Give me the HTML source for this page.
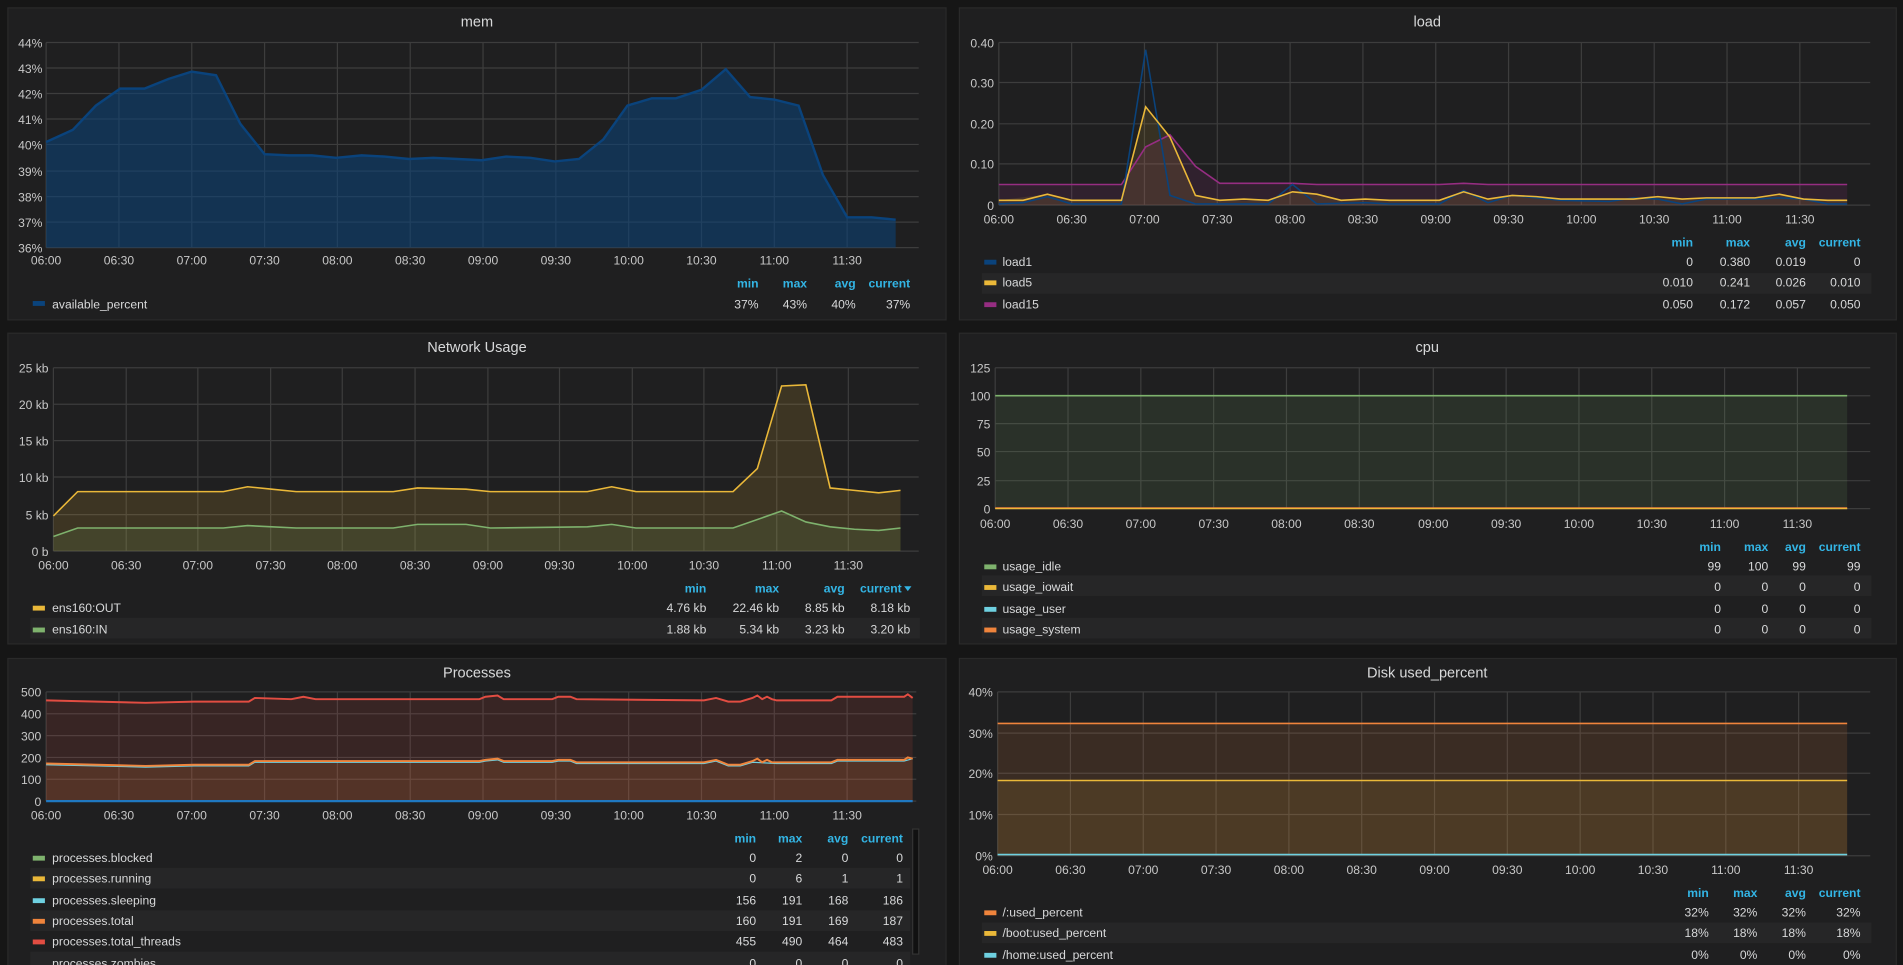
<!DOCTYPE html>
<html><head><meta charset="utf-8">
<style>
html,body{margin:0;padding:0;background:#161616;overflow:hidden}
svg{display:block}
text{font-family:"Liberation Sans",sans-serif}
.t{fill:#d8d9da;font-size:12px;text-anchor:middle}
.yl{fill:#c8c8c8;font-size:10px;text-anchor:end}
.xl{fill:#c8c8c8;font-size:10px;text-anchor:middle}
.lh{fill:#33b5e5;font-size:10px;font-weight:bold;text-anchor:end}
.lv{fill:#d8d9da;font-size:10px;text-anchor:end}
.ln{fill:#d8d9da;font-size:10px}
.g{stroke:#3d3d3d;stroke-width:1}
.p{fill:#1f1f20;stroke:#2a2a2a}
</style></head><body>
<svg width="1903" height="965" viewBox="0 0 1568 795" preserveAspectRatio="none" xmlns="http://www.w3.org/2000/svg">
<rect width="1568" height="795" fill="#161616"/>

<!-- ===== MEM ===== -->
<rect class="p" x="6.5" y="6.5" width="773" height="257"/>
<text class="t" x="393" y="22">mem</text>
<g class="g">
<line x1="38" y1="35" x2="757" y2="35"/><line x1="38" y1="56" x2="757" y2="56"/><line x1="38" y1="77" x2="757" y2="77"/><line x1="38" y1="98" x2="757" y2="98"/><line x1="38" y1="119" x2="757" y2="119"/><line x1="38" y1="141" x2="757" y2="141"/><line x1="38" y1="162" x2="757" y2="162"/><line x1="38" y1="183" x2="757" y2="183"/><line x1="38" y1="204" x2="757" y2="204"/>
<line x1="38" y1="35" x2="38" y2="204"/><line x1="98" y1="35" x2="98" y2="204"/><line x1="158" y1="35" x2="158" y2="204"/><line x1="218" y1="35" x2="218" y2="204"/><line x1="278" y1="35" x2="278" y2="204"/><line x1="338" y1="35" x2="338" y2="204"/><line x1="398" y1="35" x2="398" y2="204"/><line x1="458" y1="35" x2="458" y2="204"/><line x1="518" y1="35" x2="518" y2="204"/><line x1="578" y1="35" x2="578" y2="204"/><line x1="638" y1="35" x2="638" y2="204"/><line x1="698" y1="35" x2="698" y2="204"/>
</g>
<polygon fill="#0a437c" fill-opacity="0.55" points="38,204 38,117 60,107 79,87 99,73 119,73 139,65 158,59 178,62 198,102 218,127 238,128 257,128 277,130 298,128 317,129 337,131 357,130 377,131 397,132 417,129 437,130 457,133 477,131 497,115 517,87 537,81 557,81 578,74 598,57 618,80 638,82 658,87 678,144 698,179 718,179 738,181 738,204"/>
<polyline fill="none" stroke="#0a437c" stroke-width="2" points="38,117 60,107 79,87 99,73 119,73 139,65 158,59 178,62 198,102 218,127 238,128 257,128 277,130 298,128 317,129 337,131 357,130 377,131 397,132 417,129 437,130 457,133 477,131 497,115 517,87 537,81 557,81 578,74 598,57 618,80 638,82 658,87 678,144 698,179 718,179 738,181"/>
<g>
<text class="yl" x="35" y="39">44%</text><text class="yl" x="35" y="60">43%</text><text class="yl" x="35" y="81">42%</text><text class="yl" x="35" y="102">41%</text><text class="yl" x="35" y="123">40%</text><text class="yl" x="35" y="145">39%</text><text class="yl" x="35" y="166">38%</text><text class="yl" x="35" y="187">37%</text><text class="yl" x="35" y="208">36%</text>
</g>
<g>
<text class="xl" x="38" y="218">06:00</text><text class="xl" x="98" y="218">06:30</text><text class="xl" x="158" y="218">07:00</text><text class="xl" x="218" y="218">07:30</text><text class="xl" x="278" y="218">08:00</text><text class="xl" x="338" y="218">08:30</text><text class="xl" x="398" y="218">09:00</text><text class="xl" x="458" y="218">09:30</text><text class="xl" x="518" y="218">10:00</text><text class="xl" x="578" y="218">10:30</text><text class="xl" x="638" y="218">11:00</text><text class="xl" x="698" y="218">11:30</text>
</g>
<text class="lh" x="625" y="237">min</text><text class="lh" x="665" y="237">max</text><text class="lh" x="705" y="237">avg</text><text class="lh" x="750" y="237">current</text>
<rect x="27" y="248" width="10" height="4" fill="#0a437c"/><text class="ln" x="43" y="254">available_percent</text>
<text class="lv" x="625" y="254">37%</text><text class="lv" x="665" y="254">43%</text><text class="lv" x="705" y="254">40%</text><text class="lv" x="750" y="254">37%</text>

<!-- ===== LOAD ===== -->
<rect class="p" x="790.5" y="6.5" width="772" height="257"/>
<text class="t" x="1176" y="22">load</text>
<g class="g">
<line x1="823" y1="35" x2="1541" y2="35"/><line x1="823" y1="68" x2="1541" y2="68"/><line x1="823" y1="102" x2="1541" y2="102"/><line x1="823" y1="135" x2="1541" y2="135"/><line x1="823" y1="169" x2="1541" y2="169"/>
<line x1="823" y1="35" x2="823" y2="169"/><line x1="883" y1="35" x2="883" y2="169"/><line x1="943" y1="35" x2="943" y2="169"/><line x1="1003" y1="35" x2="1003" y2="169"/><line x1="1063" y1="35" x2="1063" y2="169"/><line x1="1123" y1="35" x2="1123" y2="169"/><line x1="1183" y1="35" x2="1183" y2="169"/><line x1="1243" y1="35" x2="1243" y2="169"/><line x1="1303" y1="35" x2="1303" y2="169"/><line x1="1363" y1="35" x2="1363" y2="169"/><line x1="1423" y1="35" x2="1423" y2="169"/><line x1="1483" y1="35" x2="1483" y2="169"/>
</g>
<polygon fill="#962d82" fill-opacity="0.15" points="823,169 823,152 924,152 944,121 964,111 985,137 1005,151 1522,152 1522,169"/>
<polygon fill="#eab839" fill-opacity="0.12" points="823,169 823,165 863,160 883,165 924,165 944,88 964,113 985,161 1005,165 1045,165 1065,158 1085,160 1105,165 1186,165 1206,158 1226,164 1246,161 1286,164 1346,164 1366,162 1386,164 1406,163 1446,163 1466,160 1486,164 1522,165 1522,169"/>
<polyline fill="none" stroke="#962d82" stroke-width="1.3" points="823,152 924,152 944,121 964,111 985,137 1005,151 1065,151 1085,152 1186,152 1206,151 1226,152 1522,152"/>
<polyline fill="none" stroke="#0a437c" stroke-width="1.3" points="823,168 843,167 863,162 883,168 924,168 944,41 964,161 985,168 1045,168 1065,152 1085,168 1125,167 1145,168 1186,168 1206,157 1226,167 1246,161 1286,165 1326,166 1346,163 1366,164 1386,168 1406,164 1446,164 1466,163 1486,164 1506,168 1522,168"/>
<polyline fill="none" stroke="#eab839" stroke-width="1.3" points="823,165 843,165 863,160 883,165 924,165 944,88 964,113 985,161 1005,165 1025,164 1045,165 1065,158 1085,160 1105,165 1125,164 1145,165 1186,165 1206,158 1226,164 1246,161 1266,162 1286,164 1346,164 1366,162 1386,164 1406,163 1446,163 1466,160 1486,164 1506,165 1522,165"/>
<g>
<text class="yl" x="819" y="39">0.40</text><text class="yl" x="819" y="72">0.30</text><text class="yl" x="819" y="106">0.20</text><text class="yl" x="819" y="139">0.10</text><text class="yl" x="819" y="173">0</text>
</g>
<g>
<text class="xl" x="823" y="184">06:00</text><text class="xl" x="883" y="184">06:30</text><text class="xl" x="943" y="184">07:00</text><text class="xl" x="1003" y="184">07:30</text><text class="xl" x="1063" y="184">08:00</text><text class="xl" x="1123" y="184">08:30</text><text class="xl" x="1183" y="184">09:00</text><text class="xl" x="1243" y="184">09:30</text><text class="xl" x="1303" y="184">10:00</text><text class="xl" x="1363" y="184">10:30</text><text class="xl" x="1423" y="184">11:00</text><text class="xl" x="1483" y="184">11:30</text>
</g>
<text class="lh" x="1395" y="203">min</text><text class="lh" x="1442" y="203">max</text><text class="lh" x="1488" y="203">avg</text><text class="lh" x="1533" y="203">current</text>
<rect x="809" y="225" width="733" height="17" fill="#262627"/>
<rect x="811" y="214" width="10" height="4" fill="#0a437c"/><text class="ln" x="826" y="219">load1</text>
<text class="lv" x="1395" y="219">0</text><text class="lv" x="1442" y="219">0.380</text><text class="lv" x="1488" y="219">0.019</text><text class="lv" x="1533" y="219">0</text>
<rect x="811" y="231" width="10" height="4" fill="#eab839"/><text class="ln" x="826" y="236">load5</text>
<text class="lv" x="1395" y="236">0.010</text><text class="lv" x="1442" y="236">0.241</text><text class="lv" x="1488" y="236">0.026</text><text class="lv" x="1533" y="236">0.010</text>
<rect x="811" y="249" width="10" height="4" fill="#962d82"/><text class="ln" x="826" y="254">load15</text>
<text class="lv" x="1395" y="254">0.050</text><text class="lv" x="1442" y="254">0.172</text><text class="lv" x="1488" y="254">0.057</text><text class="lv" x="1533" y="254">0.050</text>

<!-- ===== NETWORK ===== -->
<rect class="p" x="6.5" y="274.5" width="773" height="256"/>
<text class="t" x="393" y="290">Network Usage</text>
<g class="g">
<line x1="44" y1="303" x2="757" y2="303"/><line x1="44" y1="333" x2="757" y2="333"/><line x1="44" y1="363" x2="757" y2="363"/><line x1="44" y1="393" x2="757" y2="393"/><line x1="44" y1="424" x2="757" y2="424"/><line x1="44" y1="454" x2="757" y2="454"/>
<line x1="44" y1="303" x2="44" y2="454"/><line x1="104" y1="303" x2="104" y2="454"/><line x1="163" y1="303" x2="163" y2="454"/><line x1="223" y1="303" x2="223" y2="454"/><line x1="282" y1="303" x2="282" y2="454"/><line x1="342" y1="303" x2="342" y2="454"/><line x1="402" y1="303" x2="402" y2="454"/><line x1="461" y1="303" x2="461" y2="454"/><line x1="521" y1="303" x2="521" y2="454"/><line x1="580" y1="303" x2="580" y2="454"/><line x1="640" y1="303" x2="640" y2="454"/><line x1="699" y1="303" x2="699" y2="454"/>
</g>
<polygon fill="#eab839" fill-opacity="0.15" points="44,454 44,425 64,405 184,405 204,401 224,403 244,405 324,405 344,402 384,403 404,405 484,405 504,401 524,405 604,405 624,386 644,318 664,317 684,402 704,404 724,406 742,404 742,454"/>
<polygon fill="#7eb26d" fill-opacity="0.12" points="44,454 44,442 64,435 184,435 204,433 224,434 244,435 324,435 344,432 384,432 404,435 484,434 504,432 524,435 604,435 644,421 664,430 684,434 704,436 724,437 742,435 742,454"/>
<polyline fill="none" stroke="#eab839" stroke-width="1.3" points="44,425 64,405 184,405 204,401 224,403 244,405 324,405 344,402 384,403 404,405 484,405 504,401 524,405 604,405 624,386 644,318 664,317 684,402 704,404 724,406 742,404"/>
<polyline fill="none" stroke="#7eb26d" stroke-width="1.3" points="44,442 64,435 184,435 204,433 224,434 244,435 324,435 344,432 384,432 404,435 484,434 504,432 524,435 604,435 644,421 664,430 684,434 704,436 724,437 742,435"/>
<g>
<text class="yl" x="40" y="307">25 kb</text><text class="yl" x="40" y="337">20 kb</text><text class="yl" x="40" y="367">15 kb</text><text class="yl" x="40" y="397">10 kb</text><text class="yl" x="40" y="428">5 kb</text><text class="yl" x="40" y="458">0 b</text>
</g>
<g>
<text class="xl" x="44" y="469">06:00</text><text class="xl" x="104" y="469">06:30</text><text class="xl" x="163" y="469">07:00</text><text class="xl" x="223" y="469">07:30</text><text class="xl" x="282" y="469">08:00</text><text class="xl" x="342" y="469">08:30</text><text class="xl" x="402" y="469">09:00</text><text class="xl" x="461" y="469">09:30</text><text class="xl" x="521" y="469">10:00</text><text class="xl" x="580" y="469">10:30</text><text class="xl" x="640" y="469">11:00</text><text class="xl" x="699" y="469">11:30</text>
</g>
<text class="lh" x="582" y="488">min</text><text class="lh" x="642" y="488">max</text><text class="lh" x="696" y="488">avg</text><text class="lh" x="743" y="488">current</text>
<polygon points="745,483 751,483 748,487" fill="#33b5e5"/>
<rect x="25" y="509" width="733" height="17" fill="#262627"/>
<rect x="27" y="499" width="10" height="4" fill="#eab839"/><text class="ln" x="43" y="504">ens160:OUT</text>
<text class="lv" x="582" y="504">4.76 kb</text><text class="lv" x="642" y="504">22.46 kb</text><text class="lv" x="696" y="504">8.85 kb</text><text class="lv" x="750" y="504">8.18 kb</text>
<rect x="27" y="517" width="10" height="4" fill="#7eb26d"/><text class="ln" x="43" y="522">ens160:IN</text>
<text class="lv" x="582" y="522">1.88 kb</text><text class="lv" x="642" y="522">5.34 kb</text><text class="lv" x="696" y="522">3.23 kb</text><text class="lv" x="750" y="522">3.20 kb</text>

<!-- ===== CPU ===== -->
<rect class="p" x="790.5" y="274.5" width="772" height="256"/>
<text class="t" x="1176" y="290">cpu</text>
<g class="g">
<line x1="820" y1="303" x2="1541" y2="303"/><line x1="820" y1="326" x2="1541" y2="326"/><line x1="820" y1="349" x2="1541" y2="349"/><line x1="820" y1="372" x2="1541" y2="372"/><line x1="820" y1="396" x2="1541" y2="396"/><line x1="820" y1="419" x2="1541" y2="419"/>
<line x1="820" y1="303" x2="820" y2="419"/><line x1="880" y1="303" x2="880" y2="419"/><line x1="940" y1="303" x2="940" y2="419"/><line x1="1000" y1="303" x2="1000" y2="419"/><line x1="1060" y1="303" x2="1060" y2="419"/><line x1="1120" y1="303" x2="1120" y2="419"/><line x1="1181" y1="303" x2="1181" y2="419"/><line x1="1241" y1="303" x2="1241" y2="419"/><line x1="1301" y1="303" x2="1301" y2="419"/><line x1="1361" y1="303" x2="1361" y2="419"/><line x1="1421" y1="303" x2="1421" y2="419"/><line x1="1481" y1="303" x2="1481" y2="419"/>
</g>
<rect x="820" y="326" width="702" height="93" fill="#7eb26d" fill-opacity="0.12"/>
<line x1="820" y1="326" x2="1522" y2="326" stroke="#7eb26d" stroke-width="1.3"/>
<line x1="820" y1="418.5" x2="1522" y2="418.5" stroke="#ef843c" stroke-width="1.3"/>
<line x1="820" y1="419" x2="1522" y2="419" stroke="#eab839" stroke-width="1"/>
<g>
<text class="yl" x="816" y="307">125</text><text class="yl" x="816" y="330">100</text><text class="yl" x="816" y="353">75</text><text class="yl" x="816" y="376">50</text><text class="yl" x="816" y="400">25</text><text class="yl" x="816" y="423">0</text>
</g>
<g>
<text class="xl" x="820" y="435">06:00</text><text class="xl" x="880" y="435">06:30</text><text class="xl" x="940" y="435">07:00</text><text class="xl" x="1000" y="435">07:30</text><text class="xl" x="1060" y="435">08:00</text><text class="xl" x="1120" y="435">08:30</text><text class="xl" x="1181" y="435">09:00</text><text class="xl" x="1241" y="435">09:30</text><text class="xl" x="1301" y="435">10:00</text><text class="xl" x="1361" y="435">10:30</text><text class="xl" x="1421" y="435">11:00</text><text class="xl" x="1481" y="435">11:30</text>
</g>
<text class="lh" x="1418" y="454">min</text><text class="lh" x="1457" y="454">max</text><text class="lh" x="1488" y="454">avg</text><text class="lh" x="1533" y="454">current</text>
<rect x="809" y="474" width="733" height="17" fill="#262627"/>
<rect x="809" y="509" width="733" height="17" fill="#262627"/>
<rect x="811" y="465" width="10" height="4" fill="#7eb26d"/><text class="ln" x="826" y="470">usage_idle</text>
<text class="lv" x="1418" y="470">99</text><text class="lv" x="1457" y="470">100</text><text class="lv" x="1488" y="470">99</text><text class="lv" x="1533" y="470">99</text>
<rect x="811" y="482" width="10" height="4" fill="#eab839"/><text class="ln" x="826" y="487">usage_iowait</text>
<text class="lv" x="1418" y="487">0</text><text class="lv" x="1457" y="487">0</text><text class="lv" x="1488" y="487">0</text><text class="lv" x="1533" y="487">0</text>
<rect x="811" y="500" width="10" height="4" fill="#6ed0e0"/><text class="ln" x="826" y="505">usage_user</text>
<text class="lv" x="1418" y="505">0</text><text class="lv" x="1457" y="505">0</text><text class="lv" x="1488" y="505">0</text><text class="lv" x="1533" y="505">0</text>
<rect x="811" y="517" width="10" height="4" fill="#ef843c"/><text class="ln" x="826" y="522">usage_system</text>
<text class="lv" x="1418" y="522">0</text><text class="lv" x="1457" y="522">0</text><text class="lv" x="1488" y="522">0</text><text class="lv" x="1533" y="522">0</text>

<!-- ===== PROCESSES ===== -->
<rect class="p" x="6.5" y="542.5" width="773" height="260"/>
<text class="t" x="393" y="558">Processes</text>
<g class="g">
<line x1="38" y1="570" x2="755" y2="570"/><line x1="38" y1="588" x2="755" y2="588"/><line x1="38" y1="606" x2="755" y2="606"/><line x1="38" y1="624" x2="755" y2="624"/><line x1="38" y1="642" x2="755" y2="642"/><line x1="38" y1="660" x2="755" y2="660"/>
<line x1="38" y1="570" x2="38" y2="660"/><line x1="98" y1="570" x2="98" y2="660"/><line x1="158" y1="570" x2="158" y2="660"/><line x1="218" y1="570" x2="218" y2="660"/><line x1="278" y1="570" x2="278" y2="660"/><line x1="338" y1="570" x2="338" y2="660"/><line x1="398" y1="570" x2="398" y2="660"/><line x1="458" y1="570" x2="458" y2="660"/><line x1="518" y1="570" x2="518" y2="660"/><line x1="578" y1="570" x2="578" y2="660"/><line x1="638" y1="570" x2="638" y2="660"/><line x1="698" y1="570" x2="698" y2="660"/>
</g>
<polygon fill="#e24d42" fill-opacity="0.13" points="38,660 38,577 80,578 120,579 160,578 205,578 210,575 240,576 250,574 260,576 395,576 400,574 410,573 415,576 455,576 460,574 470,574 475,576 580,577 590,575 600,578 610,578 620,575 640,577 685,577 690,574 750,574 752,575 752,660"/>
<polygon fill="#ef843c" fill-opacity="0.15" points="38,660 38,629 80,630 120,631 160,630 205,630 210,627 260,627 395,627 400,626 410,625 415,627 455,627 460,626 470,626 475,628 580,628 590,626 600,630 610,630 620,627 640,628 685,628 690,626 745,626 752,624 752,660"/>
<polyline fill="none" stroke="#e24d42" stroke-width="1.6" points="38,577 80,578 120,579 160,578 205,578 210,575 240,576 250,574 260,576 395,576 400,574 410,573 415,576 455,576 460,574 470,574 475,576 580,577 590,575 600,578 610,578 620,575 624,573 628,576 632,574 636,576 640,577 685,577 690,574 745,574 748,572 752,575"/>
<polyline fill="none" stroke="#6ed0e0" stroke-width="1" points="38,630 80,631 120,632 160,631 205,631 210,628 260,628 395,628 400,627 410,626 415,628 455,628 460,627 470,627 475,629 580,629 590,627 600,631 610,631 620,628 640,629 685,629 690,627 745,627 752,625"/>
<polyline fill="none" stroke="#ef843c" stroke-width="1.6" points="38,629 80,630 120,631 160,630 205,630 210,627 260,627 395,627 400,626 410,625 415,627 455,627 460,626 470,626 475,628 580,628 590,626 600,630 610,630 620,627 624,625 628,628 632,626 636,628 640,628 685,628 690,626 745,626 748,624 752,625"/>
<line x1="38" y1="660" x2="752" y2="660" stroke="#1f78c1" stroke-width="1.8"/>
<g>
<text class="yl" x="34" y="574">500</text><text class="yl" x="34" y="592">400</text><text class="yl" x="34" y="610">300</text><text class="yl" x="34" y="628">200</text><text class="yl" x="34" y="646">100</text><text class="yl" x="34" y="664">0</text>
</g>
<g>
<text class="xl" x="38" y="675">06:00</text><text class="xl" x="98" y="675">06:30</text><text class="xl" x="158" y="675">07:00</text><text class="xl" x="218" y="675">07:30</text><text class="xl" x="278" y="675">08:00</text><text class="xl" x="338" y="675">08:30</text><text class="xl" x="398" y="675">09:00</text><text class="xl" x="458" y="675">09:30</text><text class="xl" x="518" y="675">10:00</text><text class="xl" x="578" y="675">10:30</text><text class="xl" x="638" y="675">11:00</text><text class="xl" x="698" y="675">11:30</text>
</g>
<text class="lh" x="623" y="694">min</text><text class="lh" x="661" y="694">max</text><text class="lh" x="699" y="694">avg</text><text class="lh" x="744" y="694">current</text>
<rect x="752" y="683" width="5" height="103" fill="#111" stroke="#333"/>
<rect x="25" y="715" width="725" height="17" fill="#262627"/>
<rect x="25" y="750" width="725" height="17" fill="#262627"/>
<rect x="25" y="784" width="725" height="17" fill="#262627"/>
<rect x="27" y="705" width="10" height="4" fill="#7eb26d"/><text class="ln" x="43" y="710">processes.blocked</text>
<text class="lv" x="623" y="710">0</text><text class="lv" x="661" y="710">2</text><text class="lv" x="699" y="710">0</text><text class="lv" x="744" y="710">0</text>
<rect x="27" y="722" width="10" height="4" fill="#eab839"/><text class="ln" x="43" y="727">processes.running</text>
<text class="lv" x="623" y="727">0</text><text class="lv" x="661" y="727">6</text><text class="lv" x="699" y="727">1</text><text class="lv" x="744" y="727">1</text>
<rect x="27" y="740" width="10" height="4" fill="#6ed0e0"/><text class="ln" x="43" y="745">processes.sleeping</text>
<text class="lv" x="623" y="745">156</text><text class="lv" x="661" y="745">191</text><text class="lv" x="699" y="745">168</text><text class="lv" x="744" y="745">186</text>
<rect x="27" y="757" width="10" height="4" fill="#ef843c"/><text class="ln" x="43" y="762">processes.total</text>
<text class="lv" x="623" y="762">160</text><text class="lv" x="661" y="762">191</text><text class="lv" x="699" y="762">169</text><text class="lv" x="744" y="762">187</text>
<rect x="27" y="774" width="10" height="4" fill="#e24d42"/><text class="ln" x="43" y="779">processes.total_threads</text>
<text class="lv" x="623" y="779">455</text><text class="lv" x="661" y="779">490</text><text class="lv" x="699" y="779">464</text><text class="lv" x="744" y="779">483</text>
<text class="ln" x="43" y="797">processes.zombies</text>
<text class="lv" x="623" y="797">0</text><text class="lv" x="661" y="797">0</text><text class="lv" x="699" y="797">0</text><text class="lv" x="744" y="797">0</text>

<!-- ===== DISK ===== -->
<rect class="p" x="790.5" y="542.5" width="772" height="260"/>
<text class="t" x="1176" y="558">Disk used_percent</text>
<g class="g">
<line x1="822" y1="570" x2="1541" y2="570"/><line x1="822" y1="604" x2="1541" y2="604"/><line x1="822" y1="637" x2="1541" y2="637"/><line x1="822" y1="671" x2="1541" y2="671"/><line x1="822" y1="705" x2="1541" y2="705"/>
<line x1="822" y1="570" x2="822" y2="705"/><line x1="882" y1="570" x2="882" y2="705"/><line x1="942" y1="570" x2="942" y2="705"/><line x1="1002" y1="570" x2="1002" y2="705"/><line x1="1062" y1="570" x2="1062" y2="705"/><line x1="1122" y1="570" x2="1122" y2="705"/><line x1="1182" y1="570" x2="1182" y2="705"/><line x1="1242" y1="570" x2="1242" y2="705"/><line x1="1302" y1="570" x2="1302" y2="705"/><line x1="1362" y1="570" x2="1362" y2="705"/><line x1="1422" y1="570" x2="1422" y2="705"/><line x1="1482" y1="570" x2="1482" y2="705"/>
</g>
<rect x="822" y="596" width="700" height="109" fill="#ef843c" fill-opacity="0.13"/>
<rect x="822" y="643" width="700" height="62" fill="#eab839" fill-opacity="0.10"/>
<line x1="822" y1="596" x2="1522" y2="596" stroke="#ef843c" stroke-width="1.3"/>
<line x1="822" y1="643" x2="1522" y2="643" stroke="#eab839" stroke-width="1.3"/>
<line x1="822" y1="704" x2="1522" y2="704" stroke="#6ed0e0" stroke-width="1.3"/>
<g>
<text class="yl" x="818" y="574">40%</text><text class="yl" x="818" y="608">30%</text><text class="yl" x="818" y="641">20%</text><text class="yl" x="818" y="675">10%</text><text class="yl" x="818" y="709">0%</text>
</g>
<g>
<text class="xl" x="822" y="720">06:00</text><text class="xl" x="882" y="720">06:30</text><text class="xl" x="942" y="720">07:00</text><text class="xl" x="1002" y="720">07:30</text><text class="xl" x="1062" y="720">08:00</text><text class="xl" x="1122" y="720">08:30</text><text class="xl" x="1182" y="720">09:00</text><text class="xl" x="1242" y="720">09:30</text><text class="xl" x="1302" y="720">10:00</text><text class="xl" x="1362" y="720">10:30</text><text class="xl" x="1422" y="720">11:00</text><text class="xl" x="1482" y="720">11:30</text>
</g>
<text class="lh" x="1408" y="739">min</text><text class="lh" x="1448" y="739">max</text><text class="lh" x="1488" y="739">avg</text><text class="lh" x="1533" y="739">current</text>
<rect x="809" y="760" width="733" height="17" fill="#262627"/>
<rect x="811" y="750" width="10" height="4" fill="#ef843c"/><text class="ln" x="826" y="755">/:used_percent</text>
<text class="lv" x="1408" y="755">32%</text><text class="lv" x="1448" y="755">32%</text><text class="lv" x="1488" y="755">32%</text><text class="lv" x="1533" y="755">32%</text>
<rect x="811" y="767" width="10" height="4" fill="#eab839"/><text class="ln" x="826" y="772">/boot:used_percent</text>
<text class="lv" x="1408" y="772">18%</text><text class="lv" x="1448" y="772">18%</text><text class="lv" x="1488" y="772">18%</text><text class="lv" x="1533" y="772">18%</text>
<rect x="811" y="785" width="10" height="4" fill="#6ed0e0"/><text class="ln" x="826" y="790">/home:used_percent</text>
<text class="lv" x="1408" y="790">0%</text><text class="lv" x="1448" y="790">0%</text><text class="lv" x="1488" y="790">0%</text><text class="lv" x="1533" y="790">0%</text>
</svg>
</body></html>
